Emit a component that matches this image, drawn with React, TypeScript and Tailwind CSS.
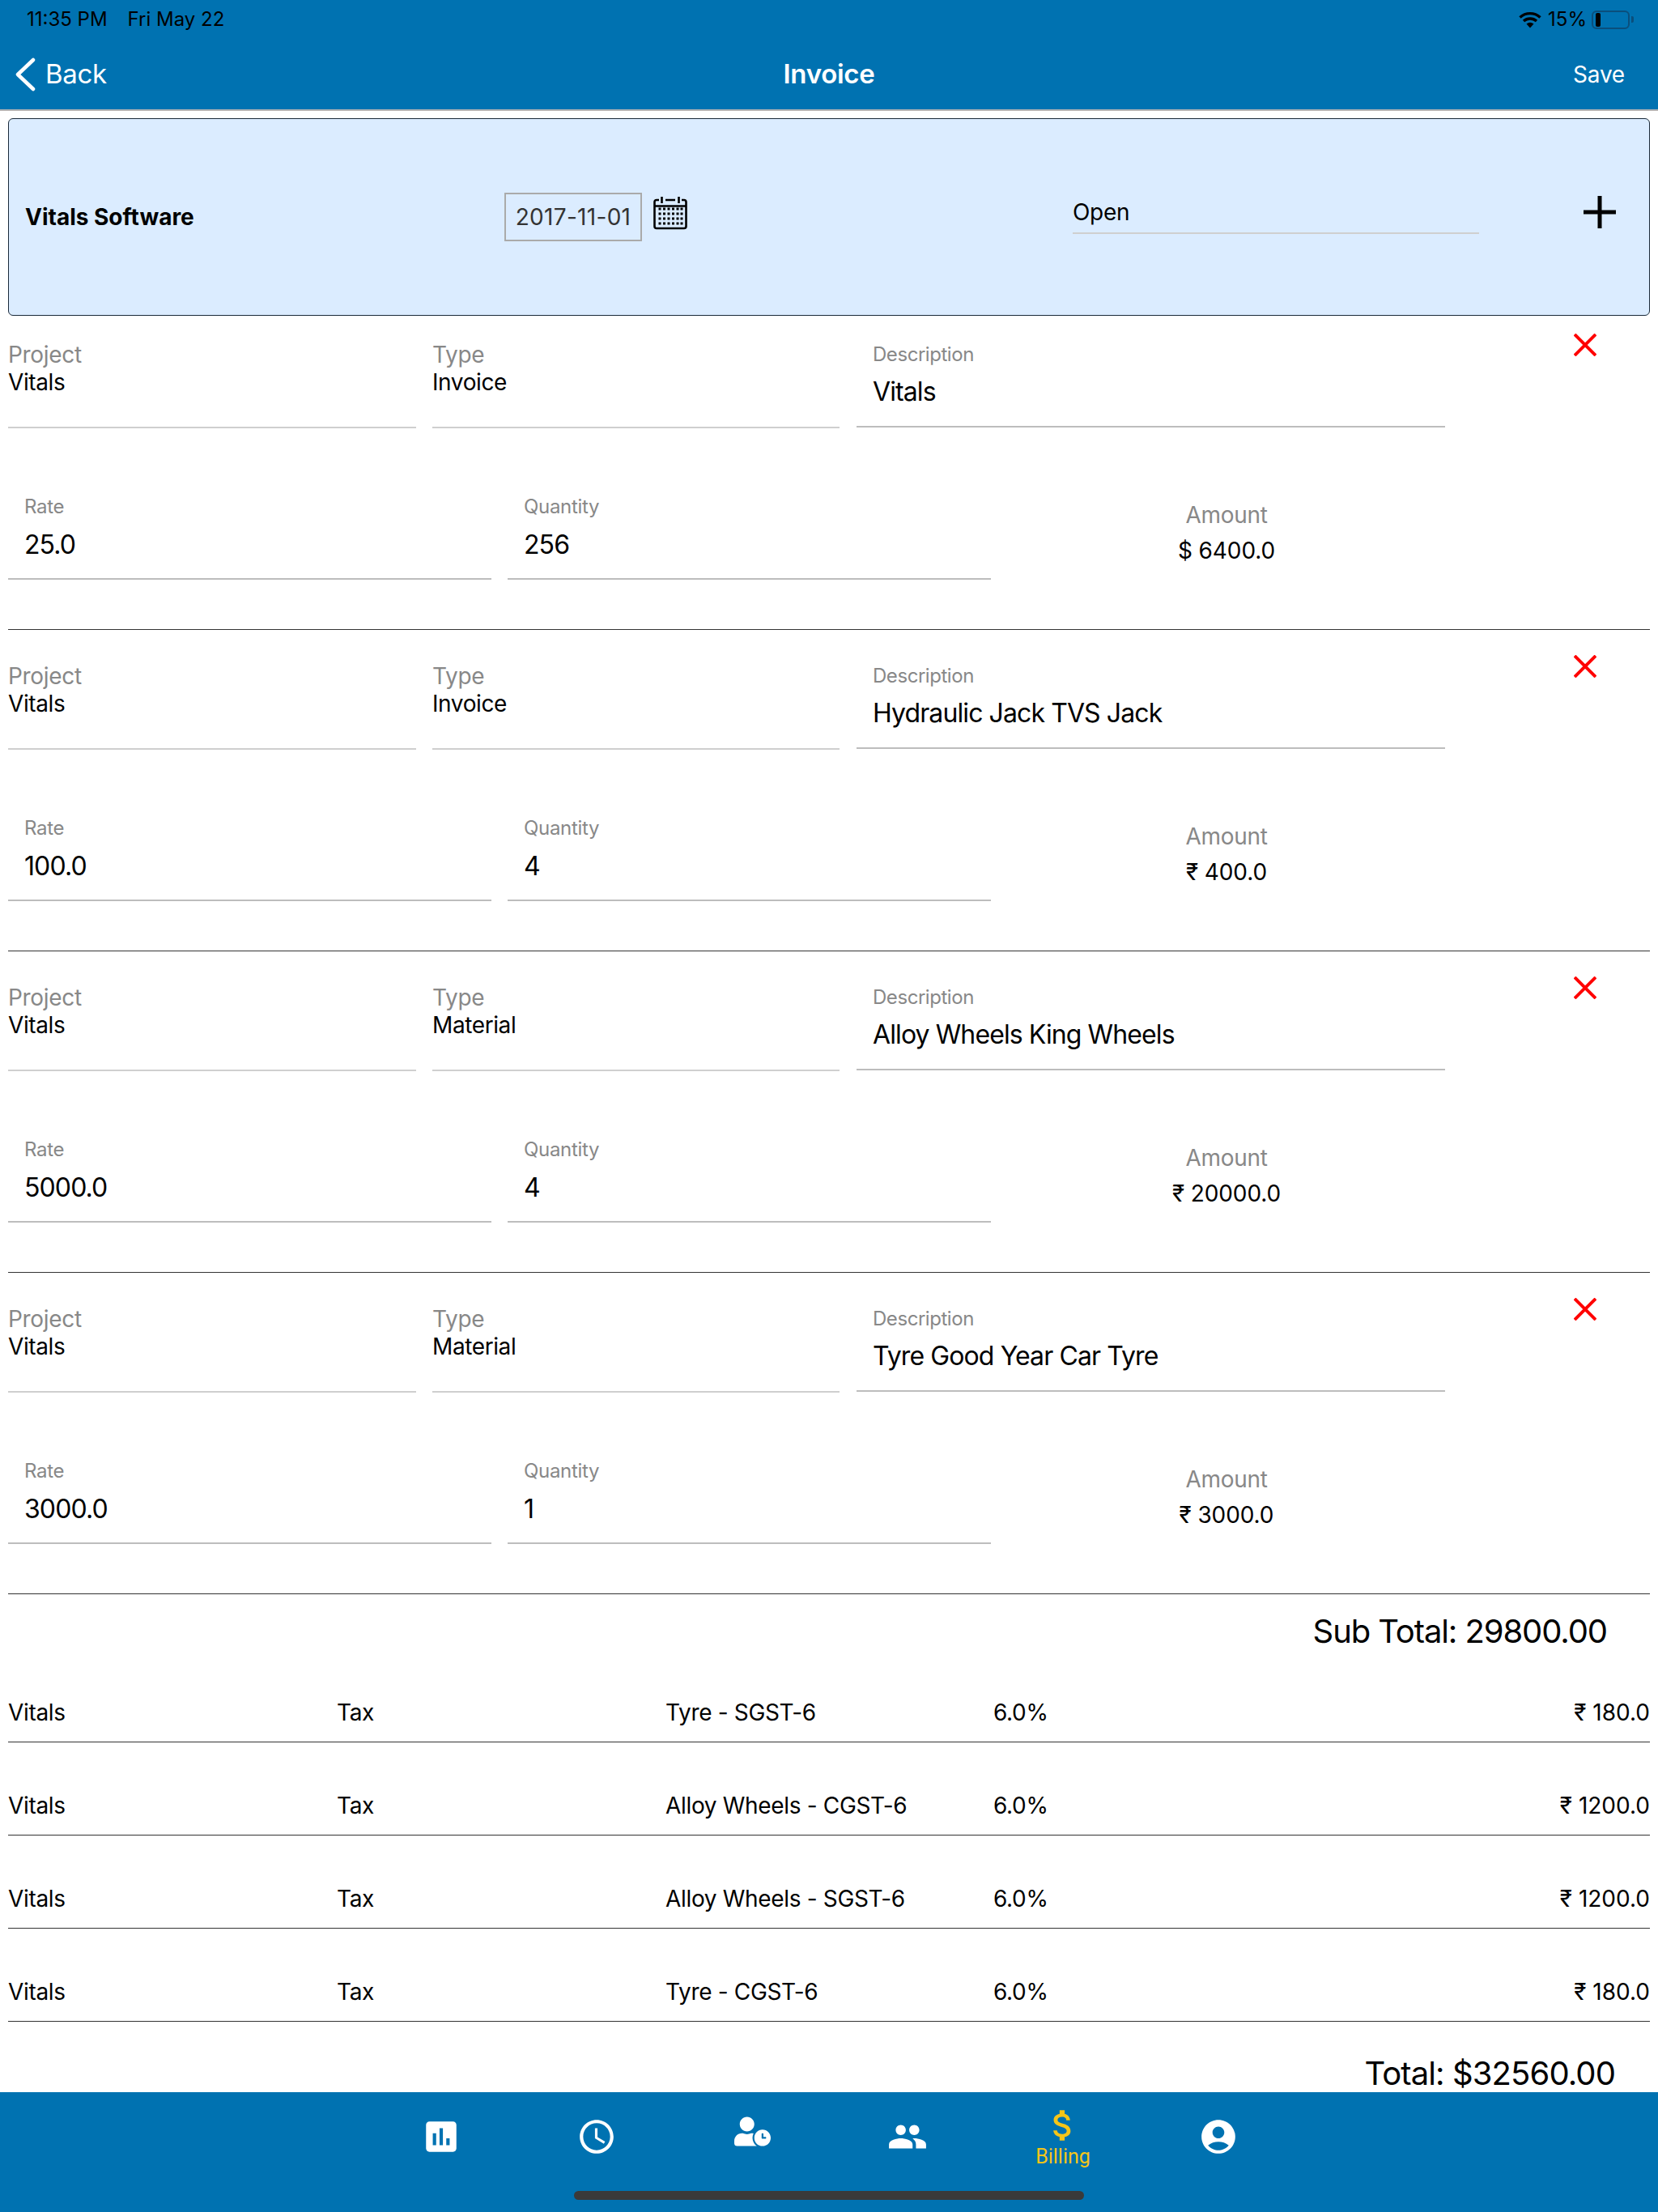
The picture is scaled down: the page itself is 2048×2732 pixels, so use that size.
import React from "react";
import {
  MdAccessTime,
  MdAccountCircle,
  MdAssessment,
  MdAttachMoney,
  MdPeople,
} from "react-icons/md";
import { FaUserClock } from "react-icons/fa";

const items = [
  { type: "Invoice", description: "Vitals", rate: "25.0", quantity: "256", amount: "$ 6400.0" },
  { type: "Invoice", description: "Hydraulic Jack TVS Jack", rate: "100.0", quantity: "4", amount: "₹ 400.0" },
  { type: "Material", description: "Alloy Wheels King Wheels", rate: "5000.0", quantity: "4", amount: "₹ 20000.0" },
  { type: "Material", description: "Tyre Good Year Car Tyre", rate: "3000.0", quantity: "1", amount: "₹ 3000.0" },
];

const taxes = [
  { name: "Tyre - SGST-6", amount: "₹ 180.0" },
  { name: "Alloy Wheels - CGST-6", amount: "₹ 1200.0" },
  { name: "Alloy Wheels - SGST-6", amount: "₹ 1200.0" },
  { name: "Tyre - CGST-6", amount: "₹ 180.0" },
];

const CalendarIcon = () => (
  <svg width="42" height="42" viewBox="0 0 42 42" fill="none" stroke="#000" strokeWidth="2.6">
    <path d="M7 5H4Q1.5 5 1.5 7.500V37.500Q1.500 40 4 40H38Q40.500 40 40.500 37.500V7.500Q40.500 5 38 5H35" />
    <path d="M10.500 1V9M31.500 1V9M15 5H27M1.500 12.500H40.500" />
    {[16, 22, 28, 34].map((y) =>
      [8, 13.500, 19, 24.500, 30, 35].map((x) => (
        <rect key={`${x}-${y}`} x={x - 1.5} y={y - 1.5} width="3" height="3" fill="#000" stroke="none" />
      ))
    )}
  </svg>
);

const LineItem = ({ item }: { item: (typeof items)[number] }) => (
  <div className="h-[397px] border-b border-[#333]">
    <div className="flex h-[148px] items-start">
      <div className="h-[148px] w-[504px] border-b-2 border-[#cfcfcf] pt-[40px]">
        <p className="text-[28px] leading-[34px] tracking-[-0.3px] text-[#888]">Project</p>
        <p className="text-[28px] leading-[35px] tracking-[-0.4px] text-black">Vitals</p>
      </div>
      <div className="ml-[20px] h-[148px] w-[503px] border-b-2 border-[#cfcfcf] pt-[40px]">
        <p className="text-[28px] leading-[34px] tracking-[-0.3px] text-[#888]">Type</p>
        <p className="text-[28px] leading-[35px] tracking-[-0.4px] text-black">{item.type}</p>
      </div>
      <div className="ml-[21px] h-[147px] w-[727px] border-b-2 border-[#bdbdbd] pl-[20px] pt-[43px]">
        <p className="text-[24px] leading-[28px] tracking-[-0.45px] text-[#888]">Description</p>
        <p className="mt-[12px] text-[32px] leading-[40px] tracking-[-0.9px] text-black">{item.description}</p>
      </div>
      <div className="ml-[159px] pt-[31px]">
        <svg width="28" height="28" viewBox="0 0 28 28" stroke="#f00" strokeWidth="4">
          <path d="M1 1L27 27M27 1L1 27" />
        </svg>
      </div>
    </div>
    <div className="flex h-[187px]">
      <div className="w-[597px] border-b-2 border-[#bdbdbd] pl-[20px] pt-[83px]">
        <p className="text-[24px] leading-[28px] tracking-[-0.3px] text-[#888]">Rate</p>
        <p className="mt-[13px] text-[32px] leading-[40px] tracking-[-0.9px] text-black">{item.rate}</p>
      </div>
      <div className="ml-[20px] w-[597px] border-b-2 border-[#bdbdbd] pl-[20px] pt-[83px]">
        <p className="text-[24px] leading-[28px] tracking-[-0.3px] text-[#888]">Quantity</p>
        <p className="mt-[13px] text-[32px] leading-[40px] tracking-[-0.9px] text-black">{item.quantity}</p>
      </div>
      <div className="ml-[46px] w-[490px] pt-[90px] text-center">
        <p className="text-[28px] leading-[34px] tracking-[-0.3px] text-[#888]">Amount</p>
        <p className="mt-[10px] text-[28px] leading-[34px] tracking-[-0.1px] text-black">{item.amount}</p>
      </div>
    </div>
  </div>
);

const App = () => {
  return (
    <div className="flex h-[2732px] w-[2048px] flex-col bg-white font-['Inter',sans-serif]">
      <header className="h-[137px] shrink-0 border-b-2 border-[#b4b4b4] bg-[#0072b1]">
        <div className="flex h-[48px] items-center justify-between pl-[33px] pr-[30px] text-[24px] text-black">
          <div className="flex gap-[25px]">
            <span>11:35 PM</span>
            <span>Fri May 22</span>
          </div>
          <div className="flex items-center">
            <svg width="28" height="21" viewBox="0 0 28 21" fill="none" stroke="#000" strokeWidth="3.4">
              <path d="M1.500 7.500C8.500 1 19.500 1 26.500 7.500M6 12C10.500 8 17.500 8 22 12" />
              <path d="M9.500 15.500Q14 12 18.500 15.500L14 20.500Z" fill="#000" stroke="none" />
            </svg>
            <span className="ml-[8px]">15%</span>
            <div className="ml-[6px] flex h-[23px] w-[47px] items-center rounded-[6px] border-2 border-[#0a4f7c] pl-[3px]">
              <div className="h-[17px] w-[6px] rounded-[2px] bg-black" />
            </div>
            <div className="ml-[2px] h-[8px] w-[3px] rounded-r-[2px] bg-[#0a4f7c]" />
          </div>
        </div>
        <div className="grid h-[87px] grid-cols-3 items-center text-white">
          <div className="flex items-center pl-[18px]">
            <svg width="26" height="42" viewBox="0 0 26 42" fill="none" stroke="#fff" strokeWidth="4.500" strokeLinecap="round" strokeLinejoin="round">
              <path d="M23 3L4 21L23 39" />
            </svg>
            <span className="ml-[12px] text-[33px] tracking-[-0.3px]">Back</span>
          </div>
          <span className="text-center text-[33px] font-semibold tracking-[-0.3px]">Invoice</span>
          <div className="pr-[41px] text-right text-[28px] tracking-[-0.2px]">Save</div>
        </div>
      </header>

      <main className="min-h-0 flex-1 px-[10px] pt-[9px]">
        <div className="mb-[-9px] flex h-[244px] items-center rounded-[6px] border border-[#1a2a3a] bg-[#dbecff]">
          <div className="w-[612px] pl-[20px] text-[28px] font-bold text-black">Vitals Software</div>
          <div className="flex h-[60px] w-[170px] items-center justify-center border-2 border-[#aaa] text-[28px] tracking-[0.3px] text-[#333]">
            2017-11-01
          </div>
          <div className="ml-[14px] mb-[10px]">
            <CalendarIcon />
          </div>
          <div className="ml-[476px] mb-[4px] w-[502px] border-b-2 border-[#cfcfcf] pb-[7px] text-[28px] leading-[36px] tracking-[-0.3px] text-black">
            Open
          </div>
          <svg className="ml-[129px] mb-[12px]" width="40" height="40" viewBox="0 0 40 40" stroke="#000" strokeWidth="5">
            <path d="M20 0V40M0 20H40" />
          </svg>
        </div>

        {items.map((item, i) => (
          <LineItem key={i} item={item} />
        ))}

        <div className="h-[68px] pr-[53px] pt-[22px] text-right text-[40px] leading-[48px] tracking-[-1.1px] text-black">
          Sub Total: 29800.00
        </div>

        {taxes.map((tax, i) => (
          <div key={i} className="flex h-[115px] border-b border-[#333] pt-[60px] text-[28px] leading-[36px] tracking-[-0.33px] text-black">
            <span className="w-[406px]">Vitals</span>
            <span className="w-[406px]">Tax</span>
            <span className="w-[405px]">{tax.name}</span>
            <span className="w-[200px]">6.0%</span>
            <span className="flex-1 text-right tracking-normal">{tax.amount}</span>
          </div>
        ))}

        <div className="pr-[43px] pt-[44px] text-right text-[40px] leading-[40px] tracking-[-0.9px] text-black">
          Total: $32560.00
        </div>
      </main>

      <footer className="h-[148px] shrink-0 bg-[#0072b1]">
        <div className="flex h-[122px] justify-center pl-[2px] text-white">
          <div className="flex w-[192px] justify-center pt-[30px]"><MdAssessment size={50} /></div>
          <div className="flex w-[192px] justify-center pt-[30px]"><MdAccessTime size={50} /></div>
          <div className="flex w-[192px] justify-center pt-[26px]"><FaUserClock size={45} /></div>
          <div className="flex w-[192px] justify-center pt-[30px]"><MdPeople size={50} /></div>
          <div className="flex w-[192px] flex-col items-center pt-[16px] text-[#f5c518]">
            <MdAttachMoney size={50} />
            <span className="font-['Roboto',sans-serif] text-[25px] leading-[28px]">Billing</span>
          </div>
          <div className="flex w-[192px] justify-center pt-[30px]"><MdAccountCircle size={50} /></div>
        </div>
        <div className="mx-auto h-[11px] w-[630px] rounded-full bg-[#3a3a3a]" />
      </footer>
    </div>
  );
};

export default App;
